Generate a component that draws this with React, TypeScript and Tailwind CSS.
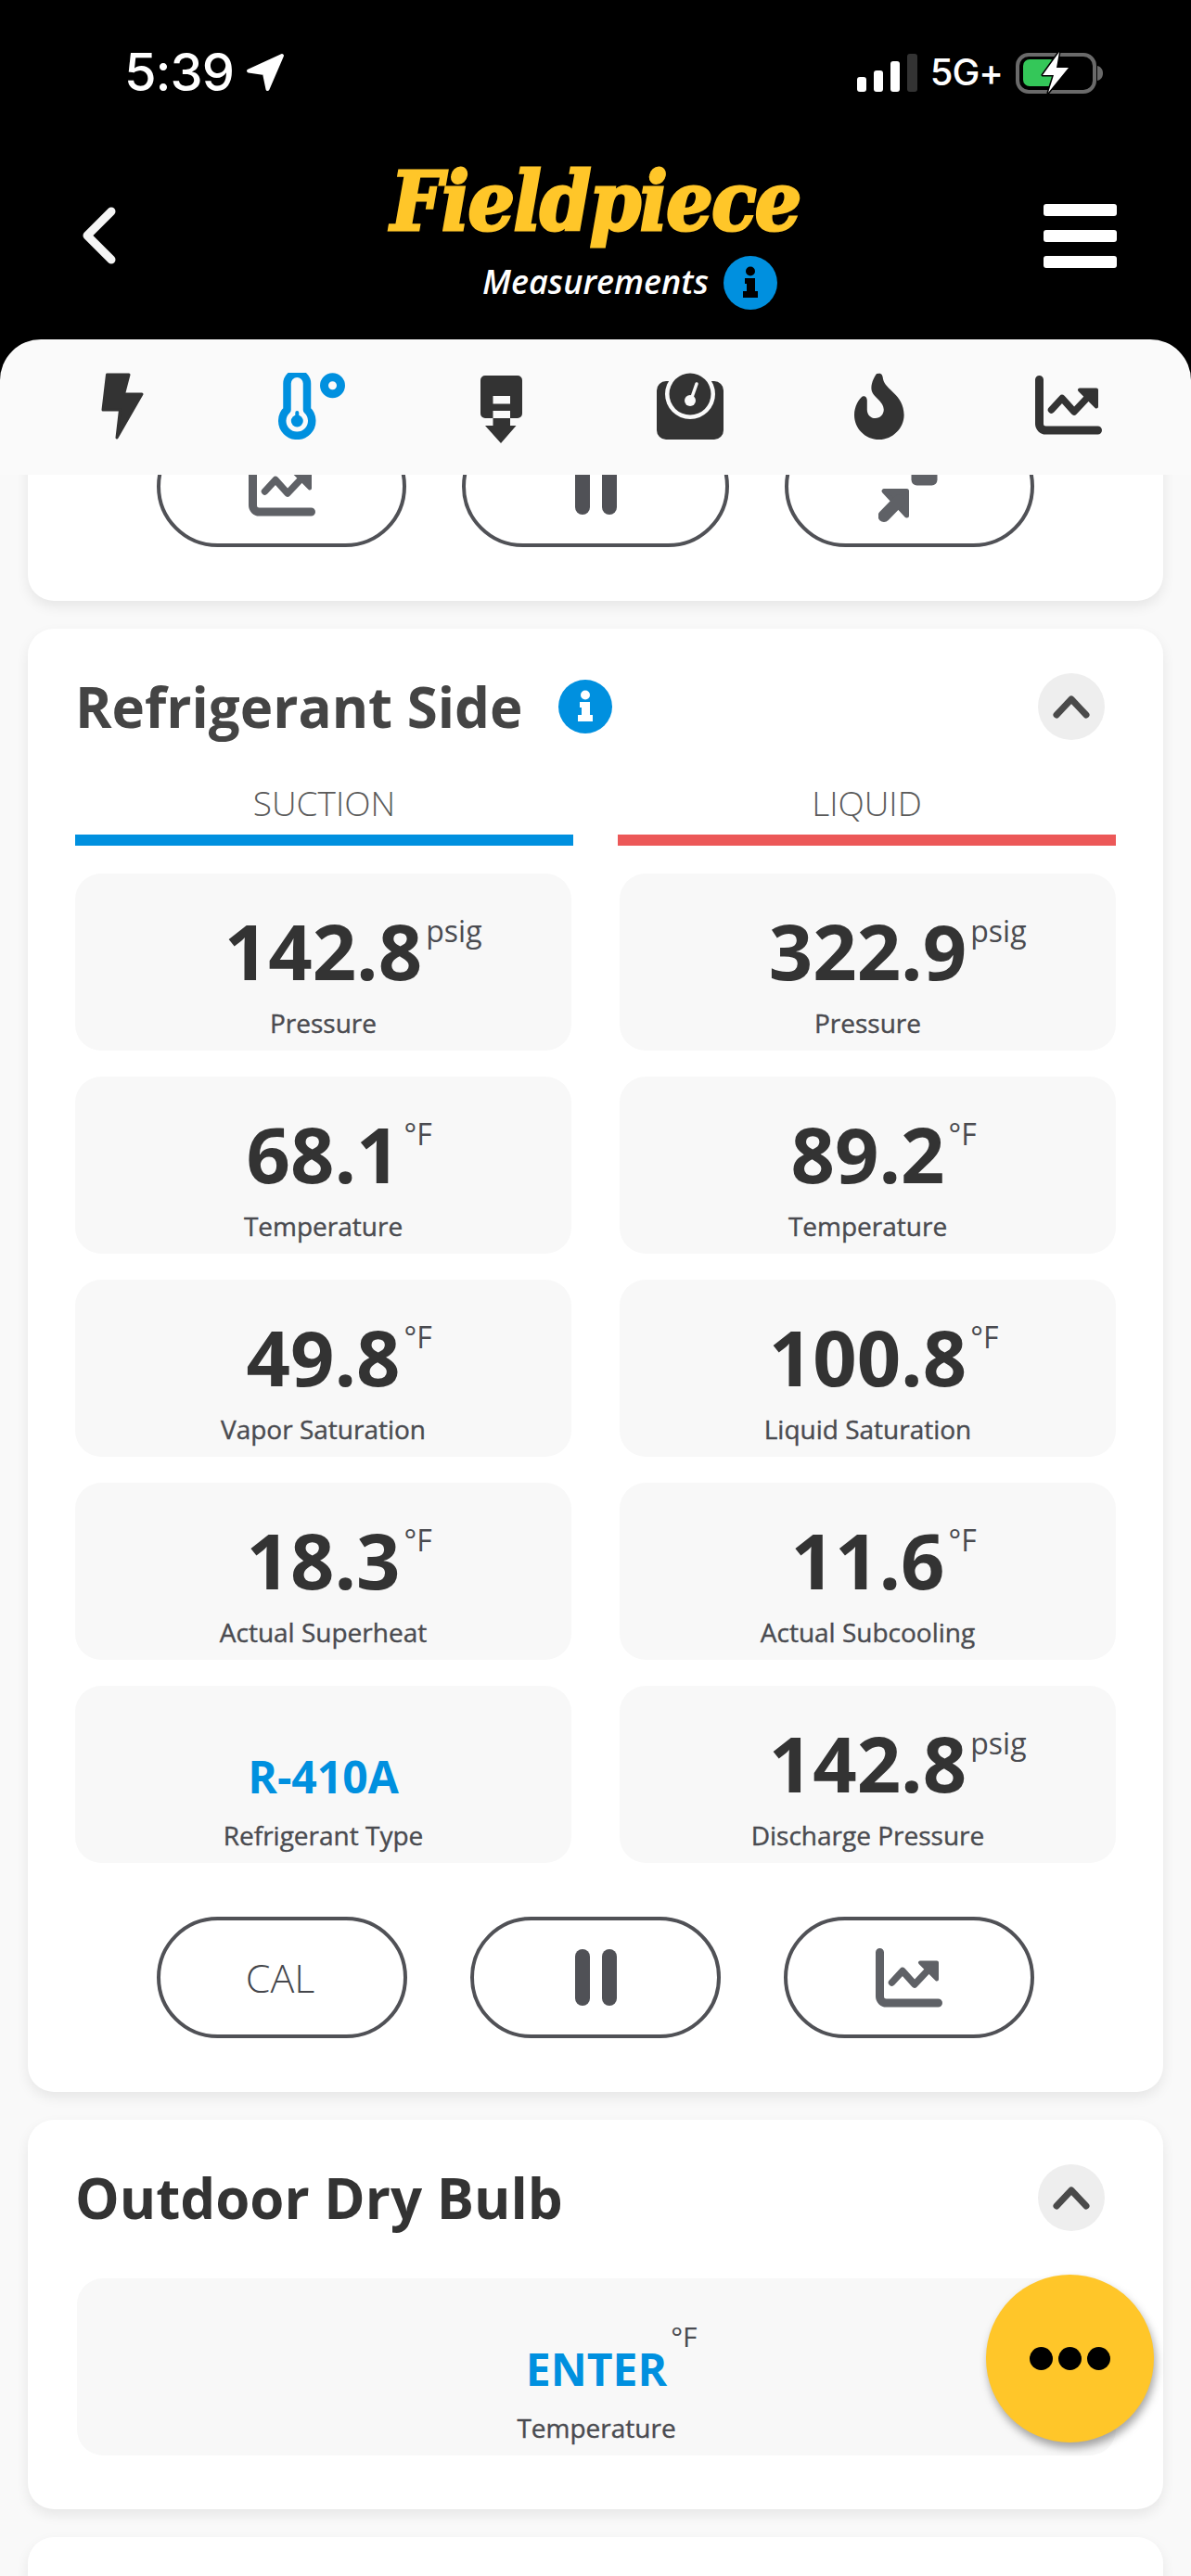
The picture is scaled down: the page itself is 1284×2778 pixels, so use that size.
// App.tsx
import React from 'react';

type Reading = { value: string; unit?: string; label: string; accent?: boolean };

const suction: Reading[] = [
  { value: '142.8', unit: 'psig', label: 'Pressure' },
  { value: '68.1', unit: '°F', label: 'Temperature' },
  { value: '49.8', unit: '°F', label: 'Vapor Saturation' },
  { value: '18.3', unit: '°F', label: 'Actual Superheat' },
  { value: 'R-410A', label: 'Refrigerant Type', accent: true },
];

const liquid: Reading[] = [
  { value: '322.9', unit: 'psig', label: 'Pressure' },
  { value: '89.2', unit: '°F', label: 'Temperature' },
  { value: '100.8', unit: '°F', label: 'Liquid Saturation' },
  { value: '11.6', unit: '°F', label: 'Actual Subcooling' },
  { value: '142.8', unit: 'psig', label: 'Discharge Pressure' },
];

const InfoBadge: React.FC<{ glyph: string }> = ({ glyph }) => (
  <svg width="58" height="58" viewBox="0 0 58 58" className="block">
    <circle cx="29" cy="29" r="29" fill="#0090df" />
    <circle cx="29" cy="16.5" r="5" fill={glyph} />
    <path d="M23 24h11v14h3v7H21v-7h4v-8h-2z" fill={glyph} />
  </svg>
);

const ChevronButton: React.FC = () => (
  <div className="flex h-[72px] w-[72px] items-center justify-center rounded-full bg-[#eeeeee]">
    <svg width="40" height="26" viewBox="0 0 40 26">
      <path d="M4 22L20 5l16 17" fill="none" stroke="#4a4a4a" strokeWidth="7" strokeLinecap="round" strokeLinejoin="round" />
    </svg>
  </div>
);

const ChartIcon: React.FC<{ color: string }> = ({ color }) => (
  <svg width="72" height="64" viewBox="0 0 72 64" className="block">
    <path d="M4.5 4.5V52a7 7 0 0 0 7 7H67.5" fill="none" stroke={color} strokeWidth="9" strokeLinecap="round" />
    <path d="M17.5 37L29 24.5 42 39 58 22" fill="none" stroke={color} strokeWidth="7.5" strokeLinecap="round" strokeLinejoin="round" />
    <path d="M48 15.5H66V33.5Z" fill={color} stroke={color} strokeWidth="4" strokeLinejoin="round" />
  </svg>
);

const PauseIcon: React.FC = () => (
  <div className="flex gap-[13px]">
    <div className="h-[61px] w-[16px] rounded-full bg-[#505156]" />
    <div className="h-[61px] w-[16px] rounded-full bg-[#505156]" />
  </div>
);

const CompressIcon: React.FC = () => (
  <svg width="68" height="76" viewBox="0 0 68 76" className="block">
    <rect x="35.5" y="20" width="28" height="16.5" rx="6" fill="#5f6166" />
    <path d="M6 42.5H30.5V69Z" fill="#5f6166" stroke="#5f6166" strokeWidth="5" strokeLinejoin="round" />
    <path d="M22 53L6 69.5" stroke="#5f6166" strokeWidth="13" strokeLinecap="round" />
  </svg>
);

const PillButton: React.FC<{ width: string; children: React.ReactNode }> = ({ width, children }) => (
  <button
    type="button"
    className={`flex h-[131px] items-center justify-center rounded-[66px] border-[4px] border-[#505156] bg-white ${width}`}
  >
    {children}
  </button>
);

const Tile: React.FC<{ reading: Reading; className?: string }> = ({ reading, className }) => {
  const isText = reading.accent === true;
  return (
    <div className={`flex h-[191px] flex-col items-center rounded-[28px] bg-[#f8f8f8] pt-[42px] ${className ?? ''}`}>
      <div className="flex h-[82px] justify-center">
        {isText ? (
          <span className="relative inline-block h-[82px] pt-[15px] text-[48px] leading-[82px] font-bold text-[#0090df]">
            {reading.value}
            {reading.unit && (
              <span className="absolute top-[6px] left-full ml-[4px] text-[30px] leading-[30px] font-normal text-[#4a4b50]">
                {reading.unit}
              </span>
            )}
          </span>
        ) : (
          <span className="relative inline-block text-[83px] leading-[82px] font-bold text-[#333333]">
            {reading.value}
            <span className="absolute top-[4px] left-full ml-[4px] text-[32px] leading-[32px] font-normal text-[#4a4b50]">
              {reading.unit}
            </span>
          </span>
        )}
      </div>
      <div className="mt-[19px] text-[28px] leading-[36px] font-medium whitespace-nowrap text-[#4a4b50] [-webkit-text-stroke:0.4px_#4a4b50]">
        {reading.label}
      </div>
    </div>
  );
};

const App: React.FC = () => {
  return (
    <div className="relative flex h-[2778px] w-[1284px] flex-col overflow-hidden bg-[#f9f9f9] font-['Open_Sans',sans-serif]">
      <header className="h-[366px] shrink-0 bg-black text-white">
        <div className="mt-0 flex h-[60px] translate-y-[48px] items-center justify-between pr-[93px] pl-[134px]">
          <div className="flex items-center gap-[13px]">
            <span className="font-['Inter',sans-serif] text-[56px] leading-none font-medium tracking-[-1px]">5:39</span>
            <svg width="42" height="42" viewBox="0 0 42 42">
              <path d="M39 3L3 19.5 20 22 23.5 39Z" fill="#fff" stroke="#fff" strokeWidth="4" strokeLinejoin="round" />
            </svg>
          </div>
          <div className="flex items-center">
            <div className="flex h-[42px] items-end gap-[8px]">
              <div className="h-[16px] w-[10px] rounded-[3px] bg-white" />
              <div className="h-[23px] w-[10px] rounded-[3px] bg-white" />
              <div className="h-[33px] w-[10px] rounded-[3px] bg-white" />
              <div className="h-[41px] w-[11px] rounded-[3px] bg-[#333333]" />
            </div>
            <span className="ml-[14px] font-['Inter',sans-serif] text-[40px] leading-none font-medium tracking-[-1px]">5G+</span>
            <svg width="96" height="46" viewBox="0 0 96 46" className="ml-[14px]">
              <rect x="2" y="4" width="83" height="40" rx="12" fill="none" stroke="#6a6a6a" strokeWidth="4" />
              <path d="M88 16c4 1 6 4 6 8s-2 7-6 8z" fill="#6a6a6a" />
              <rect x="8" y="9" width="36" height="29" rx="7" fill="#34c759" />
              <path d="M47 1L29 26h12l-6 19 22-27H44z" fill="#fff" stroke="#000" strokeWidth="3" strokeLinejoin="round" paintOrder="stroke" />
            </svg>
          </div>
        </div>

        <div className="mt-[112px] grid grid-cols-[1fr_auto_1fr] items-center">
          <div className="mt-[10px] pl-[88px]">
            <svg width="37" height="62" viewBox="0 0 37 62" className="block">
              <path d="M32 5L6 31l26 26" fill="none" stroke="#f5f5f5" strokeWidth="9" strokeLinecap="round" strokeLinejoin="round" />
            </svg>
          </div>
          <div className="flex flex-col items-center">
            <div className="h-[90px] font-['DejaVu_Serif',serif] text-[88px] leading-[90px] font-bold tracking-[-1.5px] whitespace-nowrap text-[#ffc629] italic [font-stretch:condensed] [-webkit-text-stroke:3px_#ffc629]">
              Fieldpiece
            </div>
            <div className="relative mt-[20px] text-[36px] leading-[44px] font-semibold italic">
              Measurements
              <div className="absolute top-[-6px] left-full ml-[16px]">
                <InfoBadge glyph="#000000" />
              </div>
            </div>
          </div>
          <div className="mt-[10px] flex flex-col items-end gap-[15px] pr-[80px]">
            <div className="h-[13px] w-[79px] rounded-[3px] bg-white" />
            <div className="h-[13px] w-[79px] rounded-[3px] bg-white" />
            <div className="h-[13px] w-[79px] rounded-[3px] bg-white" />
          </div>
        </div>
      </header>

      <div className="shrink-0 bg-black">
        <nav className="grid h-[146px] grid-cols-6 items-start rounded-t-[44px] bg-[#fafafa] px-[30px] pt-[36px]">
          <div className="flex justify-center">
            <svg width="46" height="72" viewBox="0 0 46 72">
              <path d="M6.5 2H30L24.5 23H44L17 70 20.5 40H2Z" fill="#333333" stroke="#333333" strokeWidth="3" strokeLinejoin="round" />
            </svg>
          </div>
          <div className="flex justify-center">
            <svg width="72" height="72" viewBox="0 0 72 72">
              <path d="M9.5 40V11.5a10.75 10.75 0 0 1 21.5 0V40a16 16 0 1 1-21.5 0Z" fill="none" stroke="#0090df" strokeWidth="8.5" strokeLinejoin="round" />
              <circle cx="20.3" cy="52" r="6.5" fill="#0090df" />
              <path d="M20.3 43v8" stroke="#0090df" strokeWidth="4" strokeLinecap="round" />
              <circle cx="58.5" cy="13.7" r="9" fill="none" stroke="#0090df" strokeWidth="9" />
            </svg>
          </div>
          <div className="flex justify-center pt-[3px]">
            <svg width="45" height="73" viewBox="0 0 45 73">
              <path d="M5 0h35a5 5 0 0 1 5 5v36a5 5 0 0 1-5 5H32V38H13.500V46H5a5 5 0 0 1-5-5V5a5 5 0 0 1 5-5ZM13.500 22V30.500H32V22Z" fill="#333333" fillRule="evenodd" />
              <path d="M13.500 46H32V54H38.500L22 73 5 54H13.500Z" fill="#333333" />
            </svg>
          </div>
          <div className="flex justify-center">
            <svg width="72" height="72" viewBox="0 0 72 72">
              <rect x="0" y="9" width="72" height="63" rx="10" fill="#333333" />
              <circle cx="36" cy="23" r="27" fill="#fafafa" />
              <rect x="0" y="0" width="9" height="9" fill="#fafafa" />
              <circle cx="36" cy="23" r="22.500" fill="#333333" />
              <path d="M43 12L37 29" stroke="#fafafa" strokeWidth="3.500" strokeLinecap="round" />
              <circle cx="36" cy="30" r="6" fill="#fafafa" />
            </svg>
          </div>
          <div className="flex justify-center">
            <svg width="54" height="72" viewBox="682 95 141 217" preserveAspectRatio="none">
              <path
                d="M752 97C760 97 762 105 763 115C768 150 822 165 822 232C822 275 790 312 752 312C712 312 682 275 682 232C682 205 695 180 705 172C712 168 718 175 718 185L718 215C718 232 728 243 741 243C755 243 765 230 765 215C765 185 730 175 730 145C730 125 740 105 745 98Z"
                fill="#333333"
              />
            </svg>
          </div>
          <div className="flex justify-center pt-[3px]">
            <ChartIcon color="#333333" />
          </div>
        </nav>
      </div>

      <main className="flex min-h-0 flex-1 flex-col gap-[30px] overflow-hidden px-[30px]">
        {/* previous card, scrolled under the tab bar */}
        <section className="-mt-[120px] shrink-0 rounded-[28px] bg-white pt-[67px] pb-[58px] shadow-[0_6px_14px_rgba(0,0,0,0.08)]">
          <div className="flex justify-center gap-[60px]">
            <PillButton width="w-[269px]">
              <ChartIcon color="#5f6166" />
            </PillButton>
            <PillButton width="w-[288px]">
              <PauseIcon />
            </PillButton>
            <PillButton width="w-[269px]">
              <CompressIcon />
            </PillButton>
          </div>
        </section>

        <section className="shrink-0 rounded-[28px] bg-white px-[51px] pt-[48px] pb-[58px] shadow-[0_6px_14px_rgba(0,0,0,0.08)]">
          <div className="mr-[12px] flex h-[72px] items-center justify-between">
            <div className="flex items-center">
              <h2 className="text-[60px] leading-[72px] font-bold text-[#444444]">Refrigerant Side</h2>
              <div className="ml-[38px]">
                <InfoBadge glyph="#ffffff" />
              </div>
            </div>
            <ChevronButton />
          </div>

          <div className="mt-[44px] grid grid-cols-2 gap-x-[48px]">
            <div>
              <div className="h-[48px] text-center text-[37px] leading-[48px] font-light text-[#5a5a5a]">SUCTION</div>
              <div className="mt-[10px] h-[12px] bg-[#0090df]" />
            </div>
            <div>
              <div className="h-[48px] text-center text-[37px] leading-[48px] font-light text-[#5a5a5a]">LIQUID</div>
              <div className="mt-[10px] h-[12px] bg-[#ec5858]" />
            </div>
          </div>

          <div className="mt-[30px] grid grid-cols-2 gap-x-[52px] gap-y-[28px]">
            {suction.map((s, i) => (
              <React.Fragment key={s.label}>
                <Tile reading={s} />
                <Tile reading={liquid[i]} />
              </React.Fragment>
            ))}
          </div>

          <div className="mt-[58px] flex justify-center gap-[68px]">
            <PillButton width="w-[270px]">
              <span className="pr-[4px] text-[43px] leading-none font-light text-[#45464b]">CAL</span>
            </PillButton>
            <PillButton width="w-[270px]">
              <PauseIcon />
            </PillButton>
            <PillButton width="w-[270px]">
              <ChartIcon color="#5f6166" />
            </PillButton>
          </div>
        </section>

        <section className="shrink-0 rounded-[28px] bg-white px-[51px] pt-[48px] pb-[58px] shadow-[0_6px_14px_rgba(0,0,0,0.08)]">
          <div className="mr-[12px] flex h-[72px] items-center justify-between">
            <h2 className="text-[60px] leading-[72px] font-bold text-[#333333]">Outdoor Dry Bulb</h2>
            <ChevronButton />
          </div>
          <div className="mt-[51px]">
            <Tile className="ml-[2px]" reading={{ value: 'ENTER', unit: '°F', label: 'Temperature', accent: true }} />
          </div>
        </section>

        <section className="h-[120px] shrink-0 rounded-[28px] bg-white shadow-[0_6px_14px_rgba(0,0,0,0.08)]" />
      </main>

      <button
        type="button"
        className="absolute top-[2453px] right-[40px] flex h-[181px] w-[181px] items-center justify-center gap-[6px] rounded-full bg-[#ffc629] shadow-[2px_6px_10px_rgba(0,0,0,0.35)]"
      >
        <span className="h-[25px] w-[25px] rounded-full bg-black" />
        <span className="h-[25px] w-[25px] rounded-full bg-black" />
        <span className="h-[25px] w-[25px] rounded-full bg-black" />
      </button>
    </div>
  );
};

export default App;
